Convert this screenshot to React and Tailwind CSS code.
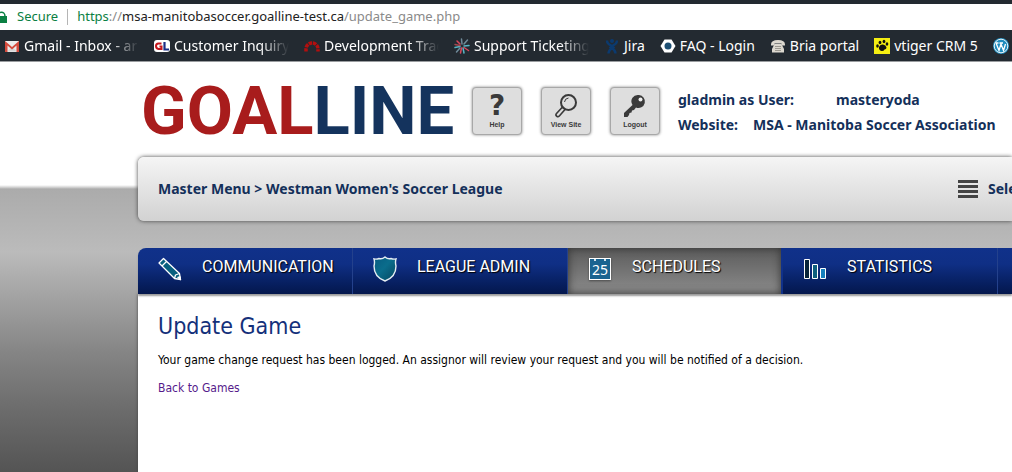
import React from 'react';

const GmailIcon = () => (
  <svg viewBox="0 0 16 16" className="w-4 h-4 shrink-0" aria-hidden="true">
    <path d="M1 3h14v11H1z" fill="#ececec" />
    <path d="M3 13.500 8 9l5 4.500z" fill="#d5d5d5" />
    <path d="M1 14V3l7 6 7-6v11h-2.500V7.500L8 11.500 3.500 7.500V14z" fill="#d54b3d" />
  </svg>
);

const GoalLineIcon = () => (
  <svg viewBox="0 0 16 16" className="w-4 h-4 shrink-0" aria-hidden="true">
    <rect y="2" width="16" height="12" rx="3" fill="#fff" />
    <path d="M7.500 5.500H4.500Q2 5.500 2 8t2.500 3H7.500V8.500H5.500" fill="none" stroke="#c4161c" strokeWidth="2" />
    <path d="M10.500 4v7.500H15" fill="none" stroke="#1b2f86" strokeWidth="2.200" />
  </svg>
);

const RedmineIcon = () => (
  <svg viewBox="0 0 16 16" className="w-4 h-4 shrink-0" aria-hidden="true">
    <path d="M2 13.500V11a6 6 0 0 1 12 0v2.500" fill="none" stroke="#b30f0f" strokeWidth="3.500" strokeDasharray="3.400 0.800" />
  </svg>
);

const SupportIcon = () => (
  <svg viewBox="0 0 16 16" className="w-4 h-4 shrink-0" fill="none" strokeWidth="1.500" strokeLinecap="round" aria-hidden="true">
    <path d="M7.500 1 8 6M10 6l3.500-4M6 10l-3.500 4" stroke="#6f8a99" />
    <path d="M10 8l5-.5M6 8.500l-5 1M9 10l1 5" stroke="#58b5c4" />
    <path d="M6 6 3 3M10 9.500l4.500 3M7.500 10 6.500 15" stroke="#d8475c" />
    <path d="M1 6.500l5 1" stroke="#a5484f" />
  </svg>
);

const JiraIcon = () => (
  <svg viewBox="0 0 16 16" className="w-4 h-4 shrink-0" fill="none" stroke="#0b3a6f" strokeWidth="2.400" aria-hidden="true">
    <circle cx="8" cy="3" r="2" fill="#0b3a6f" stroke="none" />
    <path d="M3 2.500Q3 6 8 8q5-2 5-5.500M4.500 15.500q0-3 3.500-5.500 3.500 2.500 3.500 5.500M5.500 6.500l5 4M10.500 6.500l-5 4" />
  </svg>
);

const FaqIcon = () => (
  <svg viewBox="0 0 16 16" className="w-4 h-4 shrink-0" aria-hidden="true">
    <path d="M4.500 1.500h7L15.500 8l-4 6.500h-7L.5 8z" fill="#fff" />
    <circle cx="8" cy="8" r="3.500" fill="#1d4f73" />
  </svg>
);

const PhoneIcon = () => (
  <svg viewBox="0 0 16 16" className="w-4 h-4 shrink-0" aria-hidden="true">
    <path d="M1 6.500Q1 2 8 2t7 4.500v1h-3.500V5.500h-7v2H1z" fill="#dcd8cf" />
    <path d="M4.500 6h7l2.500 5v3.500H2V11z" fill="#dcd8cf" />
    <path d="M5.500 8h1v1h-1zM7.500 8h1v1h-1zM9.500 8h1v1h-1zM5.500 10h1v1h-1zM7.500 10h1v1h-1zM9.500 10h1v1h-1zM5.500 12h1v1h-1zM7.500 12h1v1h-1zM9.500 12h1v1h-1z" fill="#5b5850" />
  </svg>
);

const VtigerIcon = () => (
  <svg viewBox="0 0 16 16" className="w-4 h-4 shrink-0" aria-hidden="true">
    <path d="M0 0h16v16H0z" fill="#f5ee12" />
    <g fill="#111">
      <path d="M5 9q1-3 4-2.500 3 .5 3.500 3 0 2-2 2-1 2-3 1.500Q4.500 12 5 9z" />
      <ellipse cx="3.500" cy="8" rx="1.300" ry="1.800" />
      <ellipse cx="6" cy="4.500" rx="1.400" ry="1.800" />
      <ellipse cx="10" cy="3.500" rx="1.400" ry="1.800" />
      <ellipse cx="13" cy="6" rx="1.300" ry="1.700" />
    </g>
  </svg>
);

const WordpressIcon = () => (
  <svg viewBox="0 0 16 16" className="w-4 h-4 shrink-0" aria-hidden="true">
    <circle cx="8" cy="8" r="8" fill="#1f8cbe" />
    <circle cx="8" cy="8" r="6.800" fill="none" stroke="#fff" strokeWidth="0.900" />
    <path d="M3 5l3 7.500L8 6l2.500 6.500L12.500 6M2.500 5h3M6.500 5h3.500" fill="none" stroke="#fff" strokeWidth="1.300" />
  </svg>
);

const bookmarks = [
  { label: 'Gmail - Inbox - ar', icon: GmailIcon, long: true },
  { label: 'Customer Inquiry', icon: GoalLineIcon, long: true },
  { label: 'Development Trac', icon: RedmineIcon, long: true },
  { label: 'Support Ticketing', icon: SupportIcon, long: true },
  { label: 'Jira', icon: JiraIcon },
  { label: 'FAQ - Login', icon: FaqIcon },
  { label: 'Bria portal', icon: PhoneIcon },
  { label: 'vtiger CRM 5', icon: VtigerIcon },
  { label: '', icon: WordpressIcon },
];

const BrowserBar = () => (
  <div className="bg-[#232a31] border-b border-[#9a9da0] font-['Noto_Sans',sans-serif] overflow-hidden">
    <div className="mt-1 h-[26px] bg-white flex items-center text-[13px] whitespace-nowrap">
      <svg viewBox="0 0 8 14" className="w-2 h-3.5 shrink-0" aria-hidden="true">
        <path d="M0 6h7v7H0z" fill="#0b8043" />
        <path d="M0 2.500q5-1 5 4" fill="none" stroke="#0b8043" strokeWidth="1.500" />
      </svg>
      <span className="ml-[9px] text-[#0b8043]">Secure</span>
      <span className="mx-[9px] w-px h-4 bg-[#b5b5b5]" />
      <p className="text-[#8a8a8a]">
        <span className="text-[#0b8043]">https</span>://
        <span className="text-[#222]">msa-manitobasoccer.goalline-test.ca</span>
        /update_game.php
      </p>
    </div>
    <nav aria-label="Bookmarks" className="h-[31px] pl-1 flex items-center gap-[15px] text-sm text-white whitespace-nowrap">
      {bookmarks.map(({ label, icon: Icon, long }) => (
        <a key={label} href="#" className="shrink-0 flex items-center gap-1">
          <Icon />
          {long ? (
            <span className="w-[115px] overflow-hidden [mask-image:linear-gradient(to_right,#000_75%,transparent)]">
              {label}
            </span>
          ) : (
            <span>{label}</span>
          )}
        </a>
      ))}
    </nav>
  </div>
);

const HelpIcon = () => (
  <span className="text-[28px] leading-7 font-bold font-['DejaVu_Sans',sans-serif]" aria-hidden="true">?</span>
);

const ViewIcon = () => (
  <svg viewBox="0 0 28 28" className="w-7 h-7" fill="none" stroke="#3a3a3a" aria-hidden="true">
    <circle cx="16.500" cy="10.500" r="7.500" strokeWidth="2" />
    <path d="M12.500 10a4.500 4.500 0 0 1 4-4" strokeWidth="1" />
    <path d="M10.500 15 4.500 21.500a1.800 1.800 0 0 0 2.800 2.500L13 17.500z" strokeWidth="1.600" />
  </svg>
);

const LogoutIcon = () => (
  <svg viewBox="0 0 28 28" className="w-7 h-7" aria-hidden="true">
    <path
      d="M18 3a6.500 6.500 0 1 1-3 12.500l-2 2.500-2 .5-.5 2-2 .5-.5 2-1.500 2H3v-4l8.500-8A6.500 6.500 0 0 1 18 3z"
      fill="#3a3a3a"
    />
    <circle cx="19.500" cy="7.500" r="2" fill="#eee" />
  </svg>
);

const actions = [
  { label: 'Help', icon: HelpIcon },
  { label: 'View Site', icon: ViewIcon },
  { label: 'Logout', icon: LogoutIcon },
];

const PencilIcon = () => (
  <svg viewBox="0 0 24 24" className="w-6 h-6" fill="#07607f" stroke="#fff" strokeWidth="1.300" strokeLinejoin="round" aria-hidden="true">
    <path d="M1 6 5.500 1.500 21.500 16.500 22.500 22.500 16.500 21.500z" />
    <path d="M4 9 8.500 4.500M16.500 21.500l1-3.500 4-1.500" fill="none" />
    <path d="M20 20.500l2.500 2-.5-2.500z" fill="#fff" />
  </svg>
);

const ShieldIcon = () => (
  <svg viewBox="0 0 24 26" className="w-6 h-[26px]" aria-hidden="true">
    <defs>
      <linearGradient id="shield" x1="0" x2="1" y1="0" y2="1">
        <stop offset="0" stopColor="#075a80" />
        <stop offset="0.450" stopColor="#0a6d8c" />
        <stop offset="1" stopColor="#05465f" />
      </linearGradient>
    </defs>
    <path
      d="M1 3q3 .5 5-.5 3 1 6-1.500 3 2.500 6 1.500 2 1 5 .5-1 3 0 7 0 11-11 15Q1 21 1 10q1-4 0-7z"
      fill="url(#shield)"
      stroke="#e4edf2"
      strokeWidth="1.400"
    />
  </svg>
);

const CalendarIcon = () => (
  <span className="w-[22px] h-[22px] border border-white bg-[#1a6390] flex flex-col items-center text-sm leading-[18px] font-['Noto_Sans',sans-serif] [text-shadow:none] shadow-[0_1px_2px_#0006]">
    <span className="w-3 h-0.5 border-x-2 border-white/80" />
    25
  </span>
);

const ChartIcon = () => (
  <svg viewBox="0 0 24 20" className="w-6 h-5" stroke="#fff" aria-hidden="true">
    <path d="M1.500.5h5v19h-5z" fill="#06233a" />
    <path d="M9.500 5.500h5v14h-5z" fill="#0d5f7d" />
    <path d="M17.500 9.500h5v10h-5z" fill="#1580bd" />
  </svg>
);

const tabs = [
  { label: 'COMMUNICATION', icon: PencilIcon },
  { label: 'LEAGUE ADMIN', icon: ShieldIcon },
  { label: 'SCHEDULES', icon: CalendarIcon, active: true },
  { label: 'STATISTICS', icon: ChartIcon },
  { label: '' },
];

const Header = () => (
  <header className="h-[95px] pt-[25px] pl-[3px] flex items-start text-[#14305a] whitespace-nowrap">
    <h1 className="w-[331px] shrink-0 text-[67px] leading-[48px] font-bold font-['Roboto',sans-serif] text-[#a81c1c]">
      GOAL<span className="text-[#14335d]">LINE</span>
    </h1>
    <div className="flex gap-[19px] shrink-0">
      {actions.map(({ label, icon: Icon }) => (
        <button
          key={label}
          type="button"
          className="w-[50px] h-12 rounded-sm border border-[#a8a8a8] bg-[#dedede] shadow-[0_0_3px_#888] text-[#3a3a3a] flex flex-col items-center justify-center"
        >
          <Icon />
          <span className="text-[7px] leading-[10px] font-bold font-['Liberation_Sans',sans-serif]">{label}</span>
        </button>
      ))}
    </div>
    <div className="ml-[18px] text-sm leading-[25px] font-bold">
      <p>
        <span className="inline-block w-[158px]">gladmin as User:</span>
        masteryoda
      </p>
      <p>
        <span className="inline-block w-[75px]">Website:</span>
        MSA - Manitoba Soccer Association
      </p>
    </div>
  </header>
);

const Breadcrumb = () => (
  <div className="h-16 pl-5 flex items-center rounded-l-md bg-linear-to-b from-[#f5f5f5] to-[#d2d2d2] shadow-[0_0_4px_#444] text-sm font-bold text-[#14305a] whitespace-nowrap">
    <p className="flex-1">
      <a href="#">Master Menu</a> &gt; <a href="#">Westman Women's Soccer League</a>
    </p>
    <button type="button" className="w-[54px] shrink-0 flex items-center gap-2.5 overflow-hidden">
      <svg viewBox="0 0 20 18" className="w-5 h-[18px] shrink-0" fill="#444" aria-hidden="true">
        <path d="M0 0h20v3H0zM0 5h20v3H0zM0 10h20v3H0zM0 15h20v3H0z" />
      </svg>
      Select
    </button>
  </div>
);

const MainNav = () => (
  <nav className="h-[46px] flex rounded-tl-lg overflow-hidden bg-linear-to-b from-[#10318a] via-[#0f2f85] via-35% to-[#04174d] shadow-[0_2px_2px_#999] relative">
    {tabs.map(({ label, icon: Icon, active }) => (
      <a
        key={label}
        href="#"
        className={`w-[215px] shrink-0 pl-5 flex gap-5 text-base text-white [text-shadow:1px_1px_1px_#000] font-['Roboto',sans-serif] ${
          active
            ? 'bg-linear-to-b from-[#5c5c5c] to-[#8c8c8c] shadow-[inset_0_0_8px_#333] border-r-2 border-[#10318a]'
            : 'border-r border-[#24418c]'
        }`}
      >
        <span className="w-6 shrink-0 h-[42px] flex items-center justify-center">{Icon && <Icon />}</span>
        <span className="leading-[38px]">{label}</span>
      </a>
    ))}
  </nav>
);

export default function App() {
  return (
    <div className="min-h-screen flex flex-col overflow-hidden">
      <BrowserBar />
      <div className="flex-1 pl-[138px] flex flex-col font-['Noto_Sans',sans-serif] bg-[linear-gradient(#fff_0,#fff_123px,#d8d8d8_125px,#ababab_127px,#bbb_190px,#a0a0a0_240px,#858585_290px,#6d6d6d_345px,#545454_410px)]">
        <Header />
        <Breadcrumb />
        <div className="mt-[27px] flex-1 flex flex-col">
          <MainNav />
          <main className="flex-1 bg-white pt-[18px] pl-5 text-xs font-['DejaVu_Sans_Condensed','DejaVu_Sans',sans-serif] shadow-[0_0_3px_#444]">
            <h2 className="text-[23px] leading-7 text-[#14307a]">Update Game</h2>
            <p className="mt-3 text-black">
              Your game change request has been logged. An assignor will review your request and you will be
              notified of a decision.
            </p>
            <p className="mt-3">
              <a href="#" className="text-[#551a8b]">Back to Games</a>
            </p>
          </main>
        </div>
      </div>
    </div>
  );
}
